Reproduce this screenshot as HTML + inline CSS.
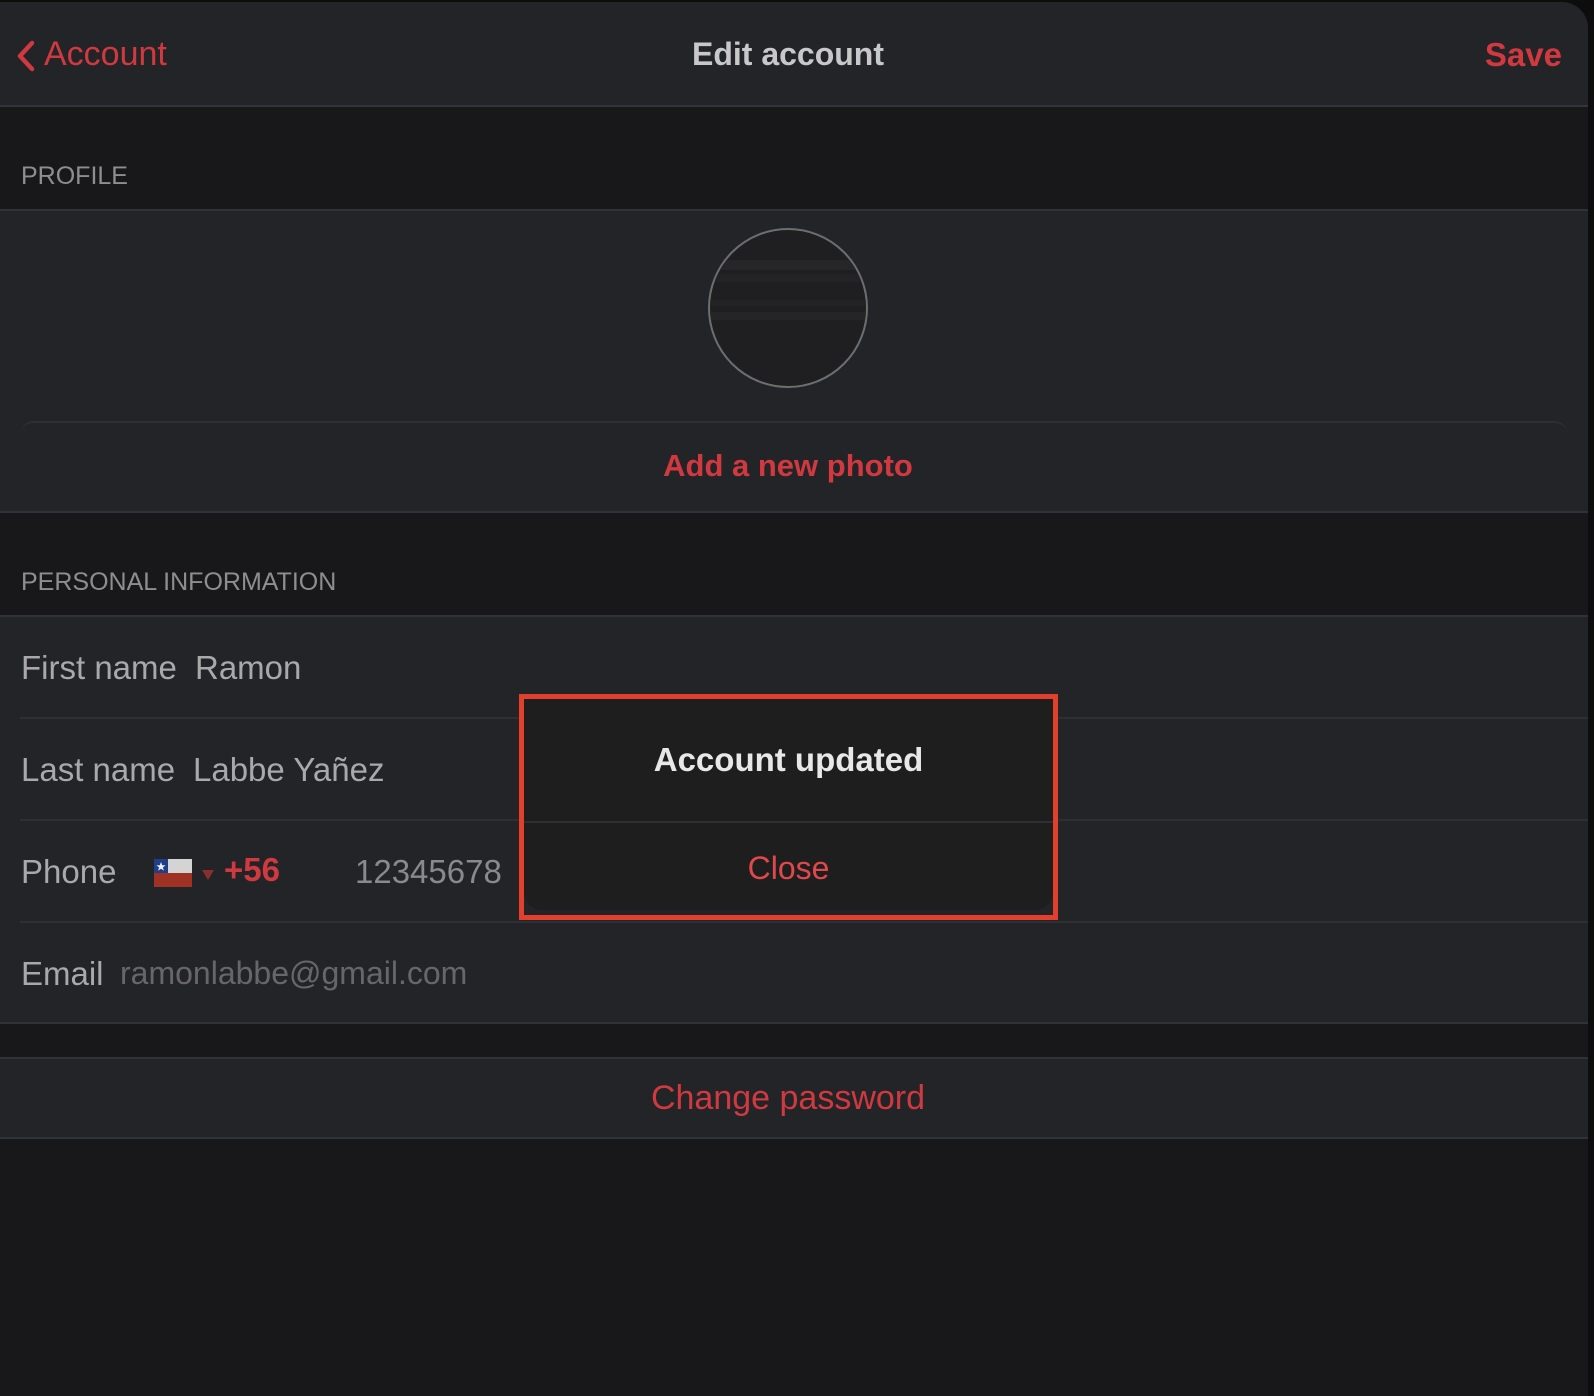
<!DOCTYPE html>
<html><head><meta charset="utf-8"><style>
*{margin:0;padding:0;box-sizing:border-box}
body{width:1594px;height:1396px;background:#0d0d0e;font-family:"Liberation Sans",sans-serif;overflow:hidden;position:relative}
.app{position:absolute;left:0;top:2px;width:1588px;height:1394px;background:#18181a;border-radius:0 26px 0 0;overflow:hidden}
.abs{position:absolute}
.nav{left:0;top:0;width:100%;height:105px;background:#232427;border-bottom:2px solid #333438}
.red{color:#d0393f}
.hdr{color:#8e8e90;font-size:25px;left:21px}
.cell{left:0;width:100%;background:#232427}
.line{height:2px;background:#2e2f32}
.lbl{font-size:33px;color:#a9a9ab;left:21px}
.val{font-size:33px;color:#a9a9ab}
.ctr{left:0;width:100%;text-align:center;padding-right:12px}
</style></head><body>
<div class="app">
 <div class="abs nav">
  <svg class="abs" style="left:16px;top:38px" width="20" height="32" viewBox="0 0 20 32"><path d="M16 3 L4 16 L16 29" stroke="#d0393f" stroke-width="4.5" fill="none" stroke-linecap="round" stroke-linejoin="round"/></svg>
  <div class="abs red" style="left:44px;top:33px;font-size:34px">Account</div>
  <div class="abs ctr" style="top:34px;font-size:32px;font-weight:bold;color:#c8c8ca">Edit account</div>
  <div class="abs red" style="right:26px;top:34px;font-size:33px;font-weight:bold">Save</div>
 </div>
 <div class="abs hdr" style="top:160px">PROFILE</div>
 <div class="abs cell" style="top:207px;height:304px;border-top:2px solid #313236;border-bottom:2px solid #313236">
  <div class="abs" style="left:708px;top:17px;width:160px;height:160px;border-radius:50%;border:2px solid #6e6e70;background:#1f1f21;overflow:hidden">
   <div class="abs" style="left:0;top:30px;width:100%;height:10px;background:#262628"></div>
   <div class="abs" style="left:0;top:44px;width:100%;height:8px;background:#232325"></div>
   <div class="abs" style="left:0;top:70px;width:100%;height:6px;background:#232325"></div>
   <div class="abs" style="left:0;top:82px;width:100%;height:8px;background:#252527"></div>
  </div>
  <div class="abs" style="left:20px;right:20px;top:210px;height:14px;border-top:2px solid #2e2f32;border-radius:14px 14px 0 0"></div>
  <div class="abs red ctr" style="top:237px;font-size:31px;font-weight:bold">Add a new photo</div>
 </div>
 <div class="abs hdr" style="top:566px">PERSONAL INFORMATION</div>
 <div class="abs cell" style="top:613px;height:409px;border-top:2px solid #313236;border-bottom:2px solid #313236">
  <div class="abs lbl" style="top:32px">First name</div><div class="abs val" style="left:195px;top:32px">Ramon</div>
  <div class="abs line" style="left:20px;right:0;top:100px"></div>
  <div class="abs lbl" style="top:134px">Last name</div><div class="abs val" style="left:193px;top:134px">Labbe Yañez</div>
  <div class="abs line" style="left:20px;right:0;top:202px"></div>
  <div class="abs lbl" style="top:236px">Phone</div>
  <svg class="abs" style="left:154px;top:242px" width="38" height="28" viewBox="0 0 38 28"><rect width="38" height="14" fill="#d4d4d4"/><rect y="14" width="38" height="14" fill="#a03225"/><rect width="14" height="14" fill="#1f3f8a"/><path d="M7 3 L8.2 6.3 L11.6 6.4 L8.9 8.4 L9.9 11.6 L7 9.7 L4.1 11.6 L5.1 8.4 L2.4 6.4 L5.8 6.3Z" fill="#eee"/></svg>
  <svg class="abs" style="left:202px;top:253px" width="12" height="10"><path d="M0 0 H12 L6 10Z" fill="#8a2e2e"/></svg>
  <div class="abs red" style="left:224px;top:234px;font-size:33px;font-weight:bold">+56</div>
  <div class="abs" style="left:355px;top:236px;font-size:33px;color:#8a8a8c">12345678</div>
  <div class="abs line" style="left:20px;right:0;top:304px"></div>
  <div class="abs lbl" style="top:338px">Email</div><div class="abs" style="left:120px;top:338px;font-size:32px;color:#67676a">ramonlabbe@gmail.com</div>
 </div>
 <div class="abs cell" style="top:1055px;height:82px;border-top:2px solid #313236;border-bottom:2px solid #313236">
  <div class="abs red ctr" style="top:20px;font-size:34px">Change password</div>
 </div>
 <div class="abs" style="left:519px;top:692px;width:539px;height:226px;border:5px solid #e2402c">
  <div class="abs" style="left:0;top:0;right:0;bottom:5px;background:#1e1e1f;border-radius:0 0 18px 18px">
   <div class="abs" style="left:0;width:100%;text-align:center;top:42px;font-size:33px;font-weight:bold;color:#e8e8e8">Account updated</div>
   <div class="abs line" style="left:0;right:0;top:122px;background:#2f2f31"></div>
   <div class="abs" style="left:0;width:100%;text-align:center;top:151px;font-size:32px;color:#e0484c">Close</div>
  </div>
 </div>
</div>
</body></html>
